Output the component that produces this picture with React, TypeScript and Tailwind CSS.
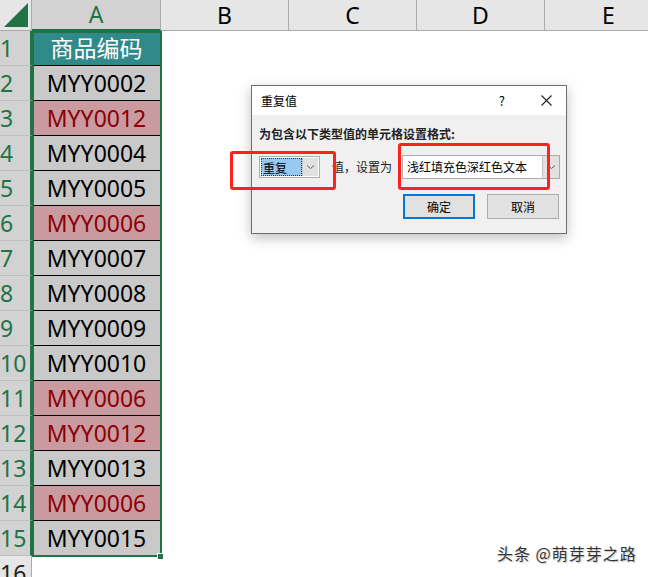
import React from "react"

const font = { fontFamily: '"Noto Sans", "Noto Sans CJK SC", sans-serif' }

interface Row {
  n: number
  value: string
  dup?: boolean
  head?: boolean
}

const rows: Row[] = [
  { n: 1, value: "商品编码", head: true },
  { n: 2, value: "MYY0002" },
  { n: 3, value: "MYY0012", dup: true },
  { n: 4, value: "MYY0004" },
  { n: 5, value: "MYY0005" },
  { n: 6, value: "MYY0006", dup: true },
  { n: 7, value: "MYY0007" },
  { n: 8, value: "MYY0008" },
  { n: 9, value: "MYY0009" },
  { n: 10, value: "MYY0010" },
  { n: 11, value: "MYY0006", dup: true },
  { n: 12, value: "MYY0012", dup: true },
  { n: 13, value: "MYY0013" },
  { n: 14, value: "MYY0006", dup: true },
  { n: 15, value: "MYY0015" },
]

const cols = ["B", "C", "D", "E"]

function Chevron() {
  return (
    <svg width="9" height="6" viewBox="0 0 9 6" fill="none" stroke="#606060" strokeWidth="1">
      <path d="M1 1.5 L4.5 4.5 L8 1.5" />
    </svg>
  )
}

function Dialog() {
  return (
    <div
      className="absolute left-[251px] top-[85px] w-[316px] h-[149px] border border-[#6e6e6e] bg-[#f0f0f0] shadow-[0_4px_12px_rgba(0,0,0,0.25)] flex flex-col"
      style={{ fontFamily: '"Noto Sans CJK SC", sans-serif' }}
    >
      <div className="h-[29px] bg-white flex items-center pl-[9px] pr-[14px] text-[12px] text-black">
        <span className="flex-1">重复值</span>
        <span className="mr-[36px] text-[13px]">?</span>
        <svg width="11" height="11" viewBox="0 0 11 11" stroke="#222" strokeWidth="1.1">
          <path d="M0.5 0.5 L10.5 10.5 M10.5 0.5 L0.5 10.5" />
        </svg>
      </div>
      <div className="pl-[7px] pt-[10px] text-[12px] font-bold text-[#222]">为包含以下类型值的单元格设置格式:</div>
      <div className="flex items-center mt-[12px] pl-[7px] text-[12px]">
        <div className="w-[61px] h-[22px] border border-[#adadad] bg-white flex p-[1px]">
          <div className="flex-1 bg-[#99c9ef] border border-dotted border-[#333] text-black leading-[17px] pl-[1px]">重复</div>
          <div className="w-[16px] bg-[#e1e1e1] border-l border-[#c6c6c6] flex items-center justify-center">
            <Chevron />
          </div>
        </div>
        <span className="ml-[12px] text-[#222]">值，设置为</span>
        <div className="ml-[10px] w-[158px] h-[24px] border border-[#adadad] bg-white flex items-center">
          <span className="flex-1 pl-[4px] text-black">浅红填充色深红色文本</span>
          <div className="w-[17px] h-[22px] bg-[#e1e1e1] border-l border-[#c6c6c6] flex items-center justify-center">
            <Chevron />
          </div>
        </div>
      </div>
      <div className="flex justify-end gap-[12px] pr-[7px] mt-[15px] text-[12px] text-black">
        <div className="w-[72px] h-[25px] border-2 border-[#0078d7] bg-[#e1e1e1] flex items-center justify-center">确定</div>
        <div className="w-[72px] h-[25px] border border-[#adadad] bg-[#e1e1e1] flex items-center justify-center">取消</div>
      </div>
    </div>
  )
}

export default function App() {
  return (
    <div className="relative w-[648px] h-[577px] overflow-hidden bg-white" style={font}>
      {/* column headers */}
      <div className="flex h-[31px] bg-[#e6e6e6] border-b border-[#ababab]">
        <div className="w-[32px] shrink-0 relative border-r border-[#ababab]">
          <svg className="absolute right-[3px] bottom-[3px]" width="24" height="24" viewBox="0 0 24 24">
            <path d="M24 0 L24 24 L0 24 Z" fill="#217346" />
          </svg>
        </div>
        <div className="w-[129px] shrink-0 bg-[#d2d2d2] border-r border-[#ababab] border-b-2 border-b-[#217346] flex items-center justify-center text-[23px] leading-none text-[#217346] -mb-[1px]">
          A
        </div>
        {cols.map((c) => (
          <div key={c} className="w-[128px] shrink-0 border-r border-[#ababab] flex items-center justify-center text-[23px] leading-none text-black">
            {c}
          </div>
        ))}
      </div>

      {rows.map((r) => (
        <div key={r.n} className="flex h-[35px]">
          <div className="w-[32px] shrink-0 bg-[#d2d2d2] border-r-2 border-[#217346] border-b border-b-[#bdbdbd] text-[23px] text-[#217346] leading-[34px]">
            {r.n}
          </div>
          <div
            className={`w-[129px] shrink-0 border-b border-black flex items-center justify-center text-[23px] ${
              r.head ? "bg-[#31898a] text-white" : r.dup ? "bg-[#c99ba0] text-[#8c0005]" : "bg-[#c9c9c9] text-black"
            }`}
          >
            {r.value}
          </div>
          <div className="flex-1" />
        </div>
      ))}
      <div className="flex h-[21px]">
        <div className="w-[32px] shrink-0 bg-[#e6e6e6] border-r border-[#ababab] text-[23px] text-[#222] leading-[34px]">16</div>
      </div>

      {/* selection border */}
      <div className="absolute left-[32px] top-[31px] w-[130px] h-[526px] border-2 border-[#217346]" />
      <div className="absolute left-[157px] top-[553px] w-[7px] h-[7px] bg-[#217346] border border-white" />

      <Dialog />

      {/* red annotations */}
      <div className="absolute left-[230px] top-[151px] w-[106px] h-[39px] border-[3px] border-[#ff2020] rounded-[3px]" />
      <div className="absolute left-[398px] top-[143px] w-[152px] h-[47px] border-[3px] border-[#ff2020] rounded-[3px]" />

      <div
        className="absolute left-[497px] top-[541px] text-[16px] tracking-[1px] text-[#333] [text-shadow:0_0_2px_#fff,1px_1px_1px_#bbb]"
        style={{ fontFamily: '"Noto Sans CJK SC", sans-serif' }}
      >
        头条 @萌芽芽之路
      </div>
    </div>
  )
}
